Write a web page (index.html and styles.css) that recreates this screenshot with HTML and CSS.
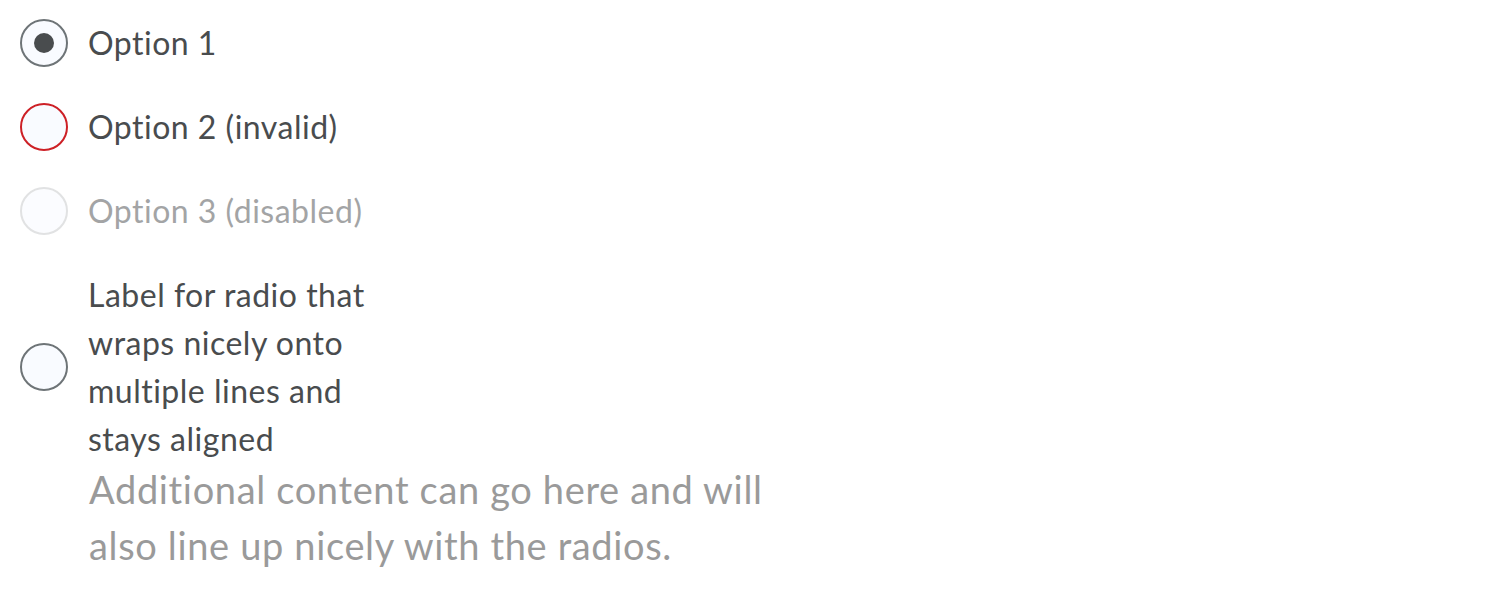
FILE: index.html
```html
<!DOCTYPE html>
<html>
<head>
<meta charset="utf-8">
<link rel="stylesheet" href="styles.css">
</head>
<body>
<div class="demo">
  <label class="radio-label">
    <span class="radio checked"></span>
    <span class="text">Option 1</span>
  </label>
  <label class="radio-label">
    <span class="radio invalid"></span>
    <span class="text">Option 2 (invalid)</span>
  </label>
  <label class="radio-label disabled">
    <span class="radio"></span>
    <span class="text">Option 3 (disabled)</span>
  </label>
  <label class="radio-label narrow last">
    <span class="radio"></span>
    <span class="text">Label for radio that wraps nicely onto multiple lines and stays aligned</span>
  </label>
  <div class="supporting">Additional content can go here and will also line up nicely with the radios.</div>
</div>
</body>
</html>
```

FILE: styles.css
```css
html, body {
  margin: 0;
  padding: 0;
  background: #ffffff;
}
.demo {
  padding: 19px 0 0 20px;
  font-family: Lato, "Open Sans", sans-serif;
  color: #494c4e;
}
.radio-label {
  display: flex;
  align-items: center;
  gap: 20px;
  font-size: 32px;
  line-height: 48px;
  letter-spacing: 0.5px;
  margin-bottom: 36px;
}
.radio-label.last {
  margin-bottom: 0;
}
.radio-label.narrow {
  width: 400px;
}
.radio {
  flex: none;
  box-sizing: border-box;
  width: 48px;
  height: 48px;
  border-radius: 50%;
  border: 2px solid #6e7477;
  background: #f9fbff;
  display: flex;
  align-items: center;
  justify-content: center;
}
.radio.checked::after {
  content: "";
  width: 20px;
  height: 20px;
  border-radius: 50%;
  background: #494c4e;
}
.radio.invalid {
  border-color: #cd2026;
}
.disabled {
  opacity: 0.5;
}
.disabled .radio {
  border-color: #c4c6c8;
  background: #f9fbff;
}
.supporting {
  margin-top: -2px;
  margin-left: 69px;
  width: 700px;
  font-size: 38px;
  line-height: 56px;
  letter-spacing: 0.65px;
  color: #9a9a9a;
}
```
